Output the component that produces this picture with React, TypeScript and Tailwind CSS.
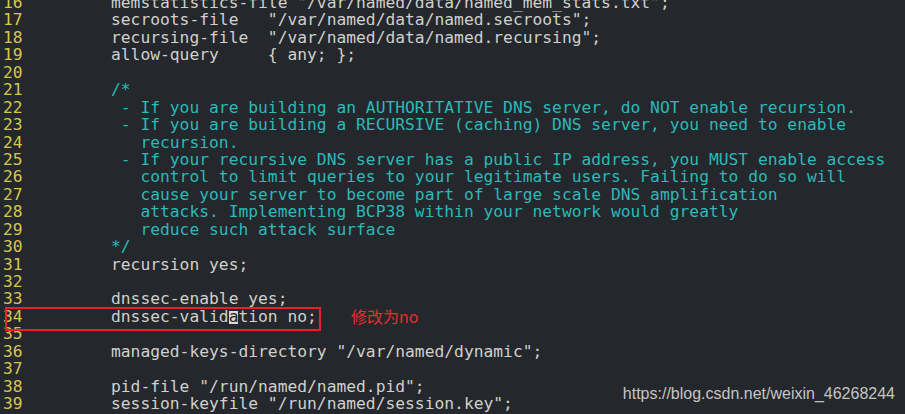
const lines: { n: number; text: string; comment?: boolean }[] = [
  { n: 16, text: 'memstatistics-file "/var/named/data/named_mem_stats.txt";' },
  { n: 17, text: 'secroots-file   "/var/named/data/named.secroots";' },
  { n: 18, text: 'recursing-file  "/var/named/data/named.recursing";' },
  { n: 19, text: "allow-query     { any; };" },
  { n: 20, text: "" },
  { n: 21, text: "/*", comment: true },
  { n: 22, text: " - If you are building an AUTHORITATIVE DNS server, do NOT enable recursion.", comment: true },
  { n: 23, text: " - If you are building a RECURSIVE (caching) DNS server, you need to enable", comment: true },
  { n: 24, text: "   recursion.", comment: true },
  { n: 25, text: " - If your recursive DNS server has a public IP address, you MUST enable access", comment: true },
  { n: 26, text: "   control to limit queries to your legitimate users. Failing to do so will", comment: true },
  { n: 27, text: "   cause your server to become part of large scale DNS amplification", comment: true },
  { n: 28, text: "   attacks. Implementing BCP38 within your network would greatly", comment: true },
  { n: 29, text: "   reduce such attack surface", comment: true },
  { n: 30, text: "*/", comment: true },
  { n: 31, text: "recursion yes;" },
  { n: 32, text: "" },
  { n: 33, text: "dnssec-enable yes;" },
  { n: 34, text: "" },
  { n: 35, text: "" },
  { n: 36, text: 'managed-keys-directory "/var/named/dynamic";' },
  { n: 37, text: "" },
  { n: 38, text: 'pid-file "/run/named/named.pid";' },
  { n: 39, text: 'session-keyfile "/run/named/session.key";' },
];

function App() {
  return (
    <div className="relative w-[905px] h-[414px] overflow-hidden bg-[#24272b]">
      <div
        className="flex flex-col mt-[-6px] pl-[3px] text-[16.3px] leading-[17.45px] whitespace-pre"
        style={{ fontFamily: '"DejaVu Sans Mono", monospace' }}
      >
        {lines.map((l) => (
          <div key={l.n} className="flex h-[17.45px]">
            <span className="w-[108px] shrink-0 text-[#d6c64a]">{l.n}</span>
            {l.n === 34 ? (
              <span className="text-[#d0d0cc]">
                dnssec-valid
                <span className="relative">
                  <span className="absolute left-0 right-0 top-[4px] h-[13px] bg-[#d9d9d9]" />
                  <span className="relative text-[#24272b]">a</span>
                </span>
                tion no;
              </span>
            ) : (
              <span className={l.comment ? "text-[#2bb9b9]" : "text-[#d0d0cc]"}>{l.text}</span>
            )}
          </div>
        ))}
      </div>

      {/* annotation overlay */}
      <div className="absolute left-[5px] top-[307px] w-[316px] h-[24px] border-2 border-[#e8202a]" />
      <div
        className="absolute left-[351px] top-[305px] text-[16px] leading-[22px] text-[#e03030]"
        style={{ fontFamily: '"Noto Sans CJK SC", "Noto Sans", sans-serif' }}
      >
        修改为no
      </div>
      <div
        className="absolute right-[10px] bottom-[10px] text-[16px] leading-[20px] text-[#c4c4c4]"
        style={{ fontFamily: '"Liberation Sans", Arial, sans-serif' }}
      >
        https://blog.csdn.net/weixin_46268244
      </div>
    </div>
  );
}

export default App;
